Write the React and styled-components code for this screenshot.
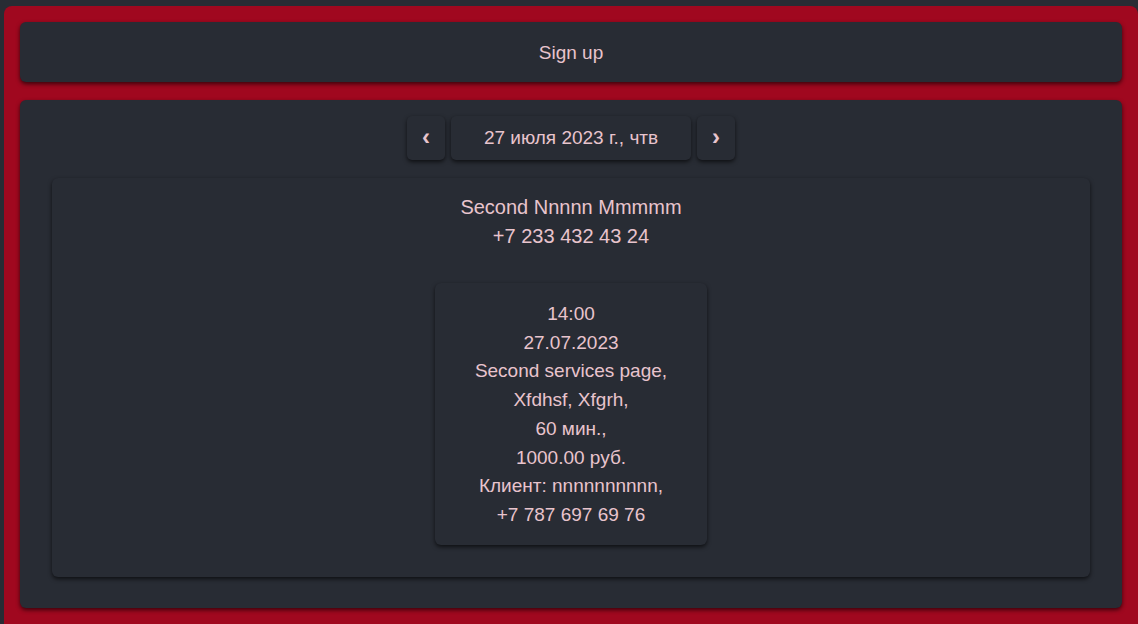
import React from "react";
import styled, { createGlobalStyle } from "styled-components";

const GlobalStyle = createGlobalStyle`
  html, body {
    margin: 0;
    background: #282c34;
  }
  body {
    font-family: "Liberation Sans", Arial, sans-serif;
    color: #e8c4cd;
  }
  * { box-sizing: border-box; }
`;

const Frame = styled.div`
  margin: 6px 0 0 4px;
  padding: 16px;
  background: #a0081f;
  border-radius: 8px 8px 0 0;
  display: flex;
  flex-direction: column;
  gap: 18px;
  height: 618px;
`;

const Panel = styled.div`
  background: #282c34;
  border-radius: 6px;
  box-shadow: 0 2px 4px rgba(0, 0, 0, 0.65);
`;

const Header = styled(Panel)`
  height: 60px;
  padding-top: 2px;
  display: flex;
  align-items: center;
  justify-content: center;
  font-size: 19px;
`;

const Body = styled(Panel)`
  padding: 16px 32px 31px;
  display: flex;
  flex-direction: column;
  align-items: center;
  gap: 18px;
`;

const DateNav = styled.div`
  display: flex;
  gap: 6px;
`;

const NavButton = styled.button`
  height: 44px;
  width: ${({ $wide }) => ($wide ? "240px" : "38px")};
  border: none;
  border-radius: 5px;
  background: #282c34;
  color: #e8c4cd;
  font-family: inherit;
  font-size: ${({ $wide }) => ($wide ? "19px" : "24px")};
  font-weight: ${({ $wide }) => ($wide ? "normal" : "bold")};
  box-shadow: 0 2px 4px rgba(0, 0, 0, 0.65);
  cursor: pointer;
  display: flex;
  align-items: center;
  justify-content: center;
  padding: 0 0 ${({ $wide }) => ($wide ? "0" : "3px")};
`;

const MasterCard = styled(Panel)`
  width: 100%;
  padding: 15px 0 32px;
  display: flex;
  flex-direction: column;
  align-items: center;
`;

const MasterInfo = styled.div`
  font-size: 20px;
  line-height: 29px;
  text-align: center;
  margin-bottom: 32px;
`;

const Appointment = styled(Panel)`
  width: 272px;
  padding: 17px 0 15px;
  font-size: 19px;
  line-height: 28.7px;
  text-align: center;
`;

const lines = [
  "14:00",
  "27.07.2023",
  "Second services page,",
  "Xfdhsf, Xfgrh,",
  "60 мин.,",
  "1000.00 руб.",
  "Клиент: nnnnnnnnnn,",
  "+7 787 697 69 76",
];

export default function App() {
  return (
    <>
      <GlobalStyle />
      <Frame>
        <Header>Sign up</Header>
        <Body>
          <DateNav>
            <NavButton>‹</NavButton>
            <NavButton $wide>27 июля 2023 г., чтв</NavButton>
            <NavButton>›</NavButton>
          </DateNav>
          <MasterCard>
            <MasterInfo>
              <div>Second Nnnnn Mmmmm</div>
              <div>+7 233 432 43 24</div>
            </MasterInfo>
            <Appointment>
              {lines.map((l) => (
                <div key={l}>{l}</div>
              ))}
            </Appointment>
          </MasterCard>
        </Body>
      </Frame>
    </>
  );
}
